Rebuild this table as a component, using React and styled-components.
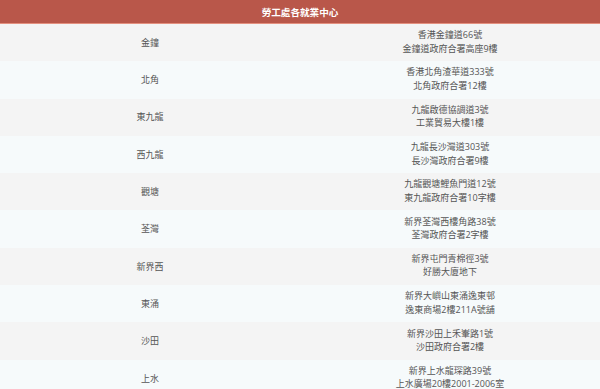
import React from "react";
import styled, { createGlobalStyle } from "styled-components";

const Global = createGlobalStyle`
  html, body { margin: 0; padding: 0; background: #ffffff; }
  body { font-family: "Open Sans", "Noto Sans CJK TC", sans-serif; }
`;

const Table = styled.div`
  width: 600px;
  display: flex;
  flex-direction: column;
`;

const Header = styled.div`
  height: 23px;
  background: #b9574a;
  border-bottom: 1px solid #e4907f;
  color: #ffffff;
  font-weight: 700;
  font-size: 9.6px;
  display: flex;
  align-items: center;
  justify-content: center;
`;

const Row = styled.div`
  display: grid;
  grid-template-columns: 1fr 1fr;
  height: 37.3px;
  align-items: center;
  background: ${(p) => (p.$odd ? "#f4f4f4" : "#f6fafb")};
  color: #555555;
  font-size: 9px;
`;

const Cell = styled.div`
  text-align: center;
  line-height: 13.5px;
  padding-bottom: ${(p) => (p.$address ? "2px" : "0")};
`;

const Line = styled.span`
  display: block;
`;

const rows = [
  ["金鐘", "香港金鐘道66號", "金鐘道政府合署高座9樓"],
  ["北角", "香港北角渣華道333號", "北角政府合署12樓"],
  ["東九龍", "九龍啟德協調道3號", "工業貿易大樓1樓"],
  ["西九龍", "九龍長沙灣道303號", "長沙灣政府合署9樓"],
  ["觀塘", "九龍觀塘鯉魚門道12號", "東九龍政府合署10字樓"],
  ["荃灣", "新界荃灣西樓角路38號", "荃灣政府合署2字樓"],
  ["新界西", "新界屯門青棉徑3號", "好勝大廈地下"],
  ["東涌", "新界大嶼山東涌逸東邨", "逸東商場2樓211A號舖"],
  ["沙田", "新界沙田上禾輋路1號", "沙田政府合署2樓"],
  ["上水", "新界上水龍琛路39號", "上水廣場20樓2001-2006室"],
];

export default function App() {
  return (
    <>
      <Global />
      <Table>
        <Header>勞工處各就業中心</Header>
        {rows.map(([name, a1, a2], i) => (
          <Row key={name} $odd={i % 2 === 0}>
            <Cell>{name}</Cell>
            <Cell $address>
              <Line>{a1}</Line>
              <Line>{a2}</Line>
            </Cell>
          </Row>
        ))}
      </Table>
    </>
  );
}
